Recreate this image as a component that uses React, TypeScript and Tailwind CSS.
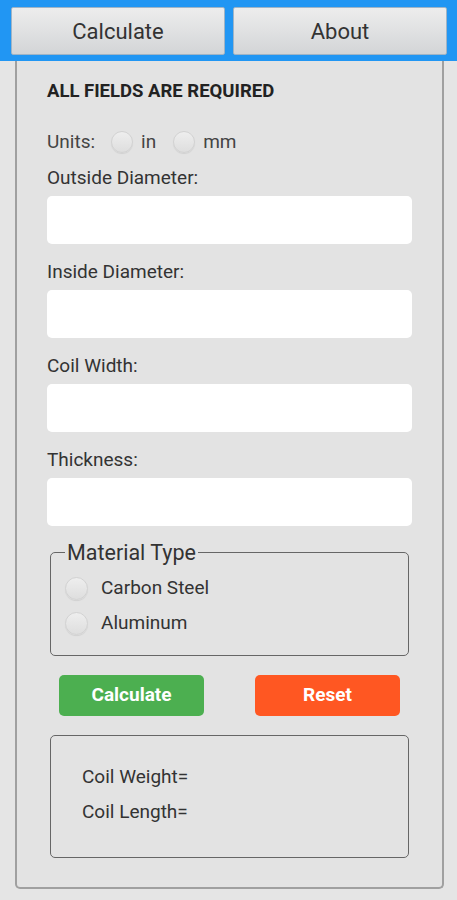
import * as React from "react";

function Radio({ size = "w-[22px] h-[22px]" }: { size?: string }) {
  return (
    <span
      className={`${size} inline-block shrink-0 rounded-full border border-[#d2d2d2] bg-gradient-to-b from-[#eeeeee] to-[#dedede] shadow-[0_1px_1px_rgba(0,0,0,0.08)]`}
    />
  );
}

function Field({ label }: { label: string }) {
  return (
    <div className="flex flex-col">
      <label className="mt-[18px] mb-[9px] text-[19px] leading-[19px] text-[#333]">
        {label}
      </label>
      <input
        type="text"
        className="h-[48px] w-full rounded-[5px] bg-white outline-none"
      />
    </div>
  );
}

export default function App() {
  const [units, setUnits] = React.useState<"in" | "mm" | null>(null);

  return (
    <div
      className="min-h-[900px] w-[457px] bg-[#e5e5e5] text-[#222]"
      style={{ fontFamily: "Roboto, 'Liberation Sans', sans-serif" }}
    >
      {/* top tab bar */}
      <div className="flex h-[61px] gap-[8px] bg-[#2196f3] pl-[11px] pr-[10px] pt-[7px] pb-[6px]">
        <button className="flex-1 rounded-[2px] border border-[#9fb4c6] bg-gradient-to-b from-[#ededed] to-[#d3d5d7] text-[22px] text-[#333]">
          Calculate
        </button>
        <button className="flex-1 rounded-[2px] border border-[#9fb4c6] bg-gradient-to-b from-[#ededed] to-[#d3d5d7] text-[22px] text-[#333]">
          About
        </button>
      </div>

      <div className="mx-[15px] w-[429px] rounded-b-[5px] border-x-2 border-b-2 border-[#a0a0a0] bg-[#e3e3e3] px-[30px] pt-[21px] pb-[29px]">
        <p className="text-[18.5px] font-bold leading-[19px] text-[#222]">
          ALL FIELDS ARE REQUIRED
        </p>

        <div className="mt-[30px] flex h-[22px] items-center text-[19px] text-[#444]">
          <span>Units:</span>
          <button className="ml-[16px] flex items-center" onClick={() => setUnits("in")}>
            <Radio />
            <span className="ml-[8px]">in</span>
          </button>
          <button className="ml-[17px] flex items-center" onClick={() => setUnits("mm")}>
            <Radio />
            <span className="ml-[8px]">mm</span>
          </button>
          <span className="hidden">{units}</span>
        </div>

        <div className="-mt-[3px]">
          <Field label="Outside Diameter:" />
          <Field label="Inside Diameter:" />
          <Field label="Coil Width:" />
          <Field label="Thickness:" />
        </div>

        <fieldset className="mx-[3px] mt-[16px] rounded-[5px] border border-[#666] pl-[14px] pr-[14px] pb-[20px]">
          <legend className="px-[2px] text-[21.5px] leading-[21px] text-[#333]">
            Material Type
          </legend>
          <div className="mt-[14px] flex flex-col gap-[12px]">
            <label className="flex h-[23px] items-center text-[19px] text-[#333]">
              <Radio size="w-[23px] h-[23px]" />
              <span className="ml-[13px]">Carbon Steel</span>
            </label>
            <label className="flex h-[23px] items-center text-[19px] text-[#333]">
              <Radio size="w-[23px] h-[23px]" />
              <span className="ml-[13px]">Aluminum</span>
            </label>
          </div>
        </fieldset>

        <div className="mt-[19px] flex justify-between px-[12px]">
          <button className="h-[41px] w-[145px] rounded-[5px] bg-[#4caf50] text-[19px] font-bold text-white">
            Calculate
          </button>
          <button className="h-[41px] w-[145px] rounded-[5px] bg-[#ff5722] text-[19px] font-bold text-white">
            Reset
          </button>
        </div>

        <div className="mx-[3px] mt-[19px] h-[123px] rounded-[5px] border border-[#666] pl-[31px] pt-[31px] text-[19px] leading-[19px] text-[#333]">
          <p>Coil Weight=</p>
          <p className="mt-[16px]">Coil Length=</p>
        </div>
      </div>
    </div>
  );
}
